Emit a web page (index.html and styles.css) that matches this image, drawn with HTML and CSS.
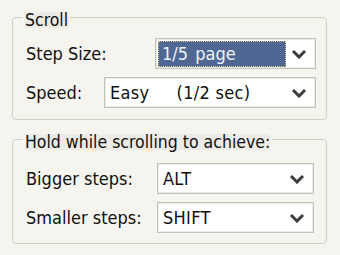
FILE: index.html
```html
<!DOCTYPE html>
<html>
<head>
<meta charset='utf-8'>
<title>Scroll options</title>
<link rel="stylesheet" href="styles.css">
</head>
<body>

<fieldset class=group>
	<legend>Scroll</legend>
	<div class=row>
		<span class=label>Step Size:</span>
		<div class="combo step">
			<span class=sel>1/5 page</span>
			<svg class=arrow width=16 height=10 viewBox="0 0 16 10"><path d="M2 2 L8 8 L14 2" /></svg>
		</div>
	</div>
	<div class=row>
		<span class=label>Speed:</span>
		<div class="combo speed">
			<span class=val>Easy     (1/2 sec)</span>
			<svg class=arrow width=16 height=10 viewBox="0 0 16 10"><path d="M2 2 L8 8 L14 2" /></svg>
		</div>
	</div>
</fieldset>

<fieldset class="group hold">
	<legend>Hold while scrolling to achieve:</legend>
	<div class=row>
		<span class=label>Bigger steps:</span>
		<div class="combo key">
			<span class=val>ALT</span>
			<svg class=arrow width=16 height=10 viewBox="0 0 16 10"><path d="M2 2 L8 8 L14 2" /></svg>
		</div>
	</div>
	<div class=row>
		<span class=label>Smaller steps:</span>
		<div class="combo key">
			<span class=val>SHIFT</span>
			<svg class=arrow width=16 height=10 viewBox="0 0 16 10"><path d="M2 2 L8 8 L14 2" /></svg>
		</div>
	</div>
</fieldset>

</body>
</html>
```

FILE: styles.css
```css
body, html {
	margin: 0;
	background: #f5f4ef;
	font-family: "DejaVu Sans Condensed", "DejaVu Sans", sans-serif;
	font-size: 18px;
	color: #111;
}

body {
	padding: 0 0 0 12px;
}

.group {
	width: 290px;
	margin: 6px 0 0 0;
	padding: 10px 10px 11px 13px;
	border: 1px solid #d2d1c6;
	border-radius: 4px;
}

.hold {
	margin-top: 8px;
	padding-top: 13px;
	padding-bottom: 10px;
}

legend {
	margin-left: -3px;
	padding: 6px 2px 0 2px;
	font-size: 17.5px;
	line-height: 16px;
	background: #ecebe5;
	background-clip: content-box;
}

.row {
	display: flex;
	align-items: center;
	height: 31px;
	margin-top: 8px;
}

.row:first-of-type {
	margin-top: 0;
}

.label {
	flex: 1;
}

.combo {
	display: flex;
	align-items: center;
	height: 29px;
	background: white;
	border: 1px solid #c3c2b9;
	box-shadow: inset 0 0 0 1px #ebeae4;
}

.step {
	width: 159px;
}

.speed {
	width: 210px;
}

.key {
	width: 155px;
	margin-right: 2px;
}

.sel {
	flex: 1;
	margin: 2px 5px 2px 2px;
	padding: 0 4px;
	height: 26px;
	line-height: 26px;
	white-space: pre;
	word-spacing: 2px;
	background: #4f6893;
	color: #eef2f8;
	outline: 1px dotted #d9c47c;
	outline-offset: -1px;
}

.val {
	flex: 1;
	padding-left: 5px;
	white-space: pre;
	letter-spacing: 0.3px;
}

.arrow {
	margin: 0 8px 0 0;
	fill: none;
	stroke: #3c3c3c;
	stroke-width: 3;
}
```
